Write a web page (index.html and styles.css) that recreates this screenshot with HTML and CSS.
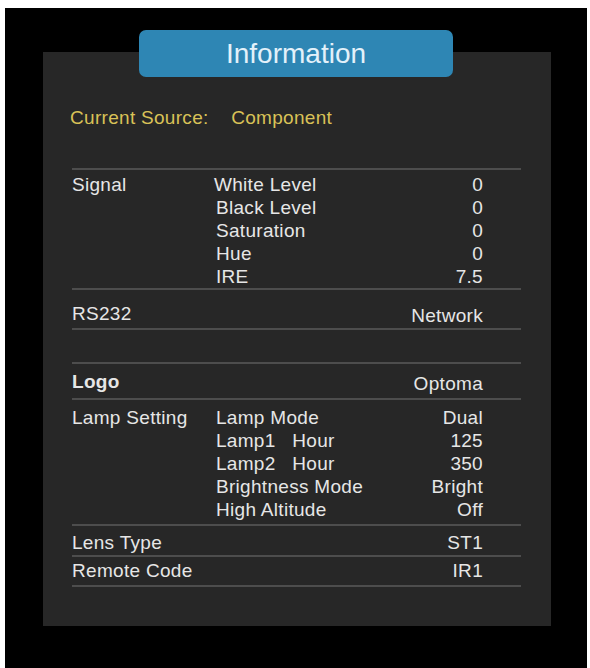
FILE: index.html
```html
<!DOCTYPE html>
<html lang="en">
  <head>
    <meta charset="UTF-8" />
    <meta name="viewport" content="width=device-width, initial-scale=1.0" />
    <title>Information</title>

    <link rel="stylesheet" href="styles.css">
  </head>
  <body>
    <div class="screen">
      <div class="panel">
        <div class="panel__tab">Information</div>

        <p class="source">
          <span class="source__label">Current Source:</span>
          <span class="source__value">Component</span>
        </p>

        <div class="info">
          <div class="info__row info__row--signal">
            <div class="info__label">Signal</div>
            <div class="info__items">
              <div class="info__item"><span class="info__sub info__sub--first">White Level</span><span class="info__value">0</span></div>
              <div class="info__item"><span class="info__sub">Black Level</span><span class="info__value">0</span></div>
              <div class="info__item"><span class="info__sub">Saturation</span><span class="info__value">0</span></div>
              <div class="info__item"><span class="info__sub">Hue</span><span class="info__value">0</span></div>
              <div class="info__item"><span class="info__sub">IRE</span><span class="info__value">7.5</span></div>
            </div>
          </div>

          <div class="info__row info__row--rs232">
            <div class="info__label">RS232</div>
            <div class="info__items">
              <div class="info__item"><span class="info__sub"></span><span class="info__value info__value--low">Network</span></div>
            </div>
          </div>

          <div class="info__row info__row--blank"></div>

          <div class="info__row info__row--logo">
            <div class="info__label info__label--bold">Logo</div>
            <div class="info__items">
              <div class="info__item"><span class="info__sub"></span><span class="info__value info__value--low">Optoma</span></div>
            </div>
          </div>

          <div class="info__row info__row--lamp">
            <div class="info__label">Lamp Setting</div>
            <div class="info__items">
              <div class="info__item"><span class="info__sub">Lamp Mode</span><span class="info__value">Dual</span></div>
              <div class="info__item"><span class="info__sub">Lamp1   Hour</span><span class="info__value">125</span></div>
              <div class="info__item"><span class="info__sub">Lamp2   Hour</span><span class="info__value">350</span></div>
              <div class="info__item"><span class="info__sub">Brightness Mode</span><span class="info__value">Bright</span></div>
              <div class="info__item"><span class="info__sub">High Altitude</span><span class="info__value">Off</span></div>
            </div>
          </div>

          <div class="info__row info__row--lens">
            <div class="info__label">Lens Type</div>
            <div class="info__items">
              <div class="info__item"><span class="info__sub"></span><span class="info__value">ST1</span></div>
            </div>
          </div>

          <div class="info__row info__row--remote">
            <div class="info__label">Remote Code</div>
            <div class="info__items">
              <div class="info__item"><span class="info__sub"></span><span class="info__value">IR1</span></div>
            </div>
          </div>
        </div>
      </div>
    </div>
  </body>
</html>
```

FILE: styles.css
```css
body {
  background-color: #fff;
  margin: 0;
}

.screen {
  background-color: #000;
  box-sizing: border-box;
  font-family: "Liberation Sans", Arial, sans-serif;
  height: 660px;
  margin: 8px 3px 0 5px;
  padding: 44px 0 0 38px;
}

.panel {
  background-color: #272727;
  box-sizing: border-box;
  height: 574px;
  padding: 54px 30px 0 29px;
  position: relative;
  width: 508px;
}

/* title tab sits over the top edge of the panel */
.panel__tab {
  background-color: #2e86b4;
  border-radius: 7px;
  color: #e3f1fa;
  font-size: 28px;
  height: 47px;
  left: 96px;
  line-height: 47px;
  position: absolute;
  text-align: center;
  top: -22px;
  width: 314px;
}

.source {
  color: #d9c257;
  font-size: 19px;
  letter-spacing: 0.3px;
  line-height: 23px;
  margin: 0 0 0 -2px;
}

.source__value {
  margin-left: 17px;
}

.info {
  border-top: 2px solid #4d4d4d;
  color: #e6e6e6;
  font-size: 19px;
  letter-spacing: 0.3px;
  line-height: 23px;
  margin-top: 39px;
}

.info__row {
  border-bottom: 2px solid #4d4d4d;
  display: flex;
}

.info__row--signal { padding: 3px 0 0; }
.info__row--rs232 { padding: 12px 0 3px; }
.info__row--blank { height: 32px; }
.info__row--logo { padding: 6px 0 5px; }
.info__row--lamp { padding: 6px 0 3px; }
.info__row--lens { padding: 5px 0 1px; }
.info__row--remote { padding: 2px 0 3px; }

.info__label {
  flex: 0 0 142px;
}

.info__label--bold {
  font-weight: bold;
}

.info__items {
  flex: 1;
  padding-right: 38px;
}

.info__item {
  display: flex;
  justify-content: space-between;
}

.info__sub {
  padding-left: 2px;
  white-space: pre;
}

.info__sub--first {
  padding-left: 0;
}

.info__value--low {
  position: relative;
  top: 2px;
}
```
